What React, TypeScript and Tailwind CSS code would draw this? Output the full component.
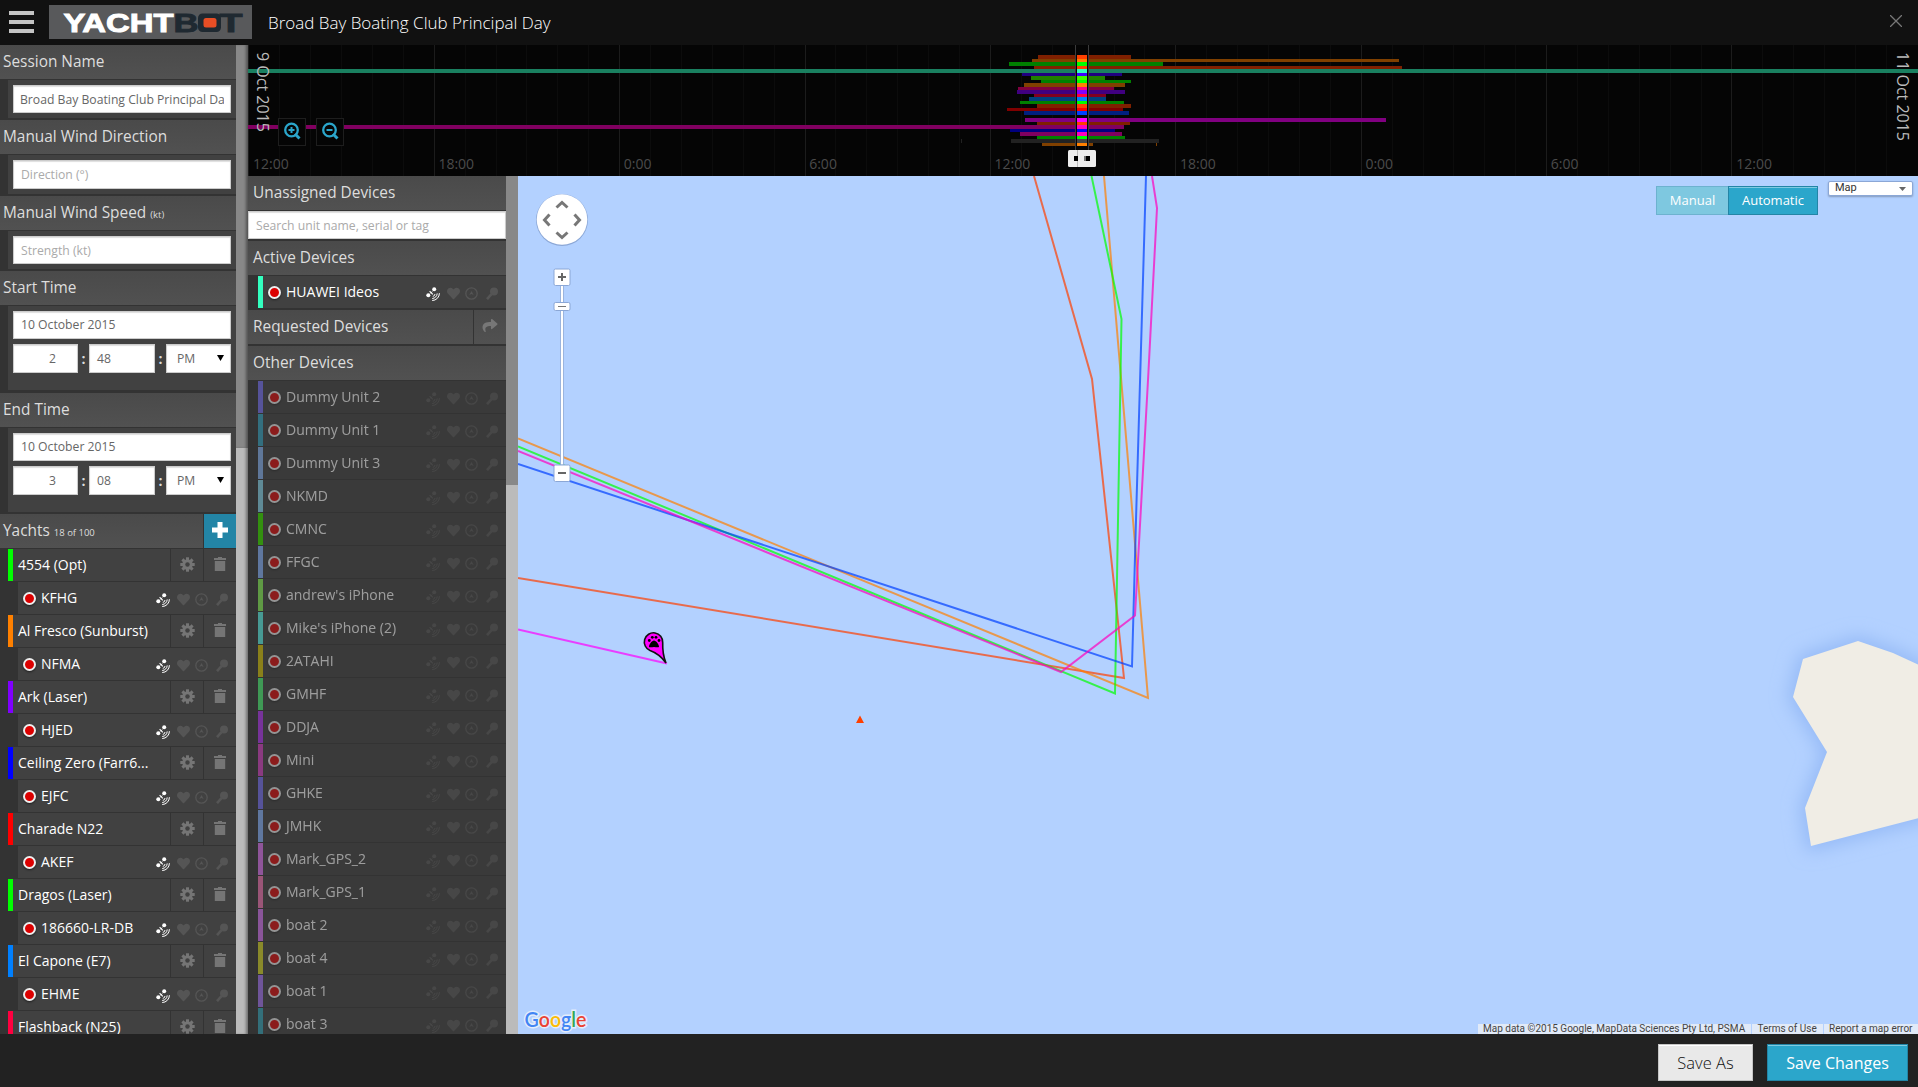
import React from "react";
import { FaHeart, FaShare } from "react-icons/fa";

const yachts = [
  { name: "4554 (Opt)", color: "#00ff00", device: "KFHG" },
  { name: "Al Fresco (Sunburst)", color: "#ff8000", device: "NFMA" },
  { name: "Ark (Laser)", color: "#8000ff", device: "HJED" },
  { name: "Ceiling Zero (Farr6...", color: "#0000ff", device: "EJFC" },
  { name: "Charade N22", color: "#ff0000", device: "AKEF" },
  { name: "Dragos (Laser)", color: "#00ff00", device: "186660-LR-DB" },
  { name: "El Capone (E7)", color: "#0080ff", device: "EHME" },
  { name: "Flashback (N25)", color: "#ff0040", device: "" },
];

const others: [string, string][] = [
  ["Dummy Unit 2", "#56539a"],
  ["Dummy Unit 1", "#336f7f"],
  ["Dummy Unit 3", "#5f7799"],
  ["NKMD", "#5f8a96"],
  ["CMNC", "#33900f"],
  ["FFGC", "#5f779f"],
  ["andrew's iPhone", "#5f9a44"],
  ["Mike's iPhone (2)", "#479a94"],
  ["2ATAHI", "#8a801a"],
  ["GMHF", "#3f9955"],
  ["DDJA", "#77339a"],
  ["Mini", "#8a3a80"],
  ["GHKE", "#56539a"],
  ["JMHK", "#5f779f"],
  ["Mark_GPS_2", "#8f559a"],
  ["Mark_GPS_1", "#9a5577"],
  ["boat 2", "#8a559a"],
  ["boat 4", "#8a8a2a"],
  ["boat 1", "#6f559a"],
  ["boat 3", "#336f7a"],
];

/* Timeline spans: row, start, end, colour, dimmed colour */
const spans: [number, number, number, string, string][] = [
  [0, 1038, 1131, "#ff4000", "#802000"],
  [1, 1032, 1399, "#ff8000", "#804000"],
  [2, 1009, 1163, "#00ff00", "#008000"],
  [3, 1034, 1402, "#ff4000", "#802000"],
  [4, 248, 1918, "#33ffbf", "#1a8060"],
  [5, 1022, 1122, "#4000ff", "#200080"],
  [6, 1031, 1105, "#40ff00", "#208000"],
  [7, 1041, 1131, "#00ff00", "#008000"],
  [8, 1024, 1125, "#ff8000", "#804000"],
  [9, 1018, 1114, "#ff0080", "#800040"],
  [10, 1017, 1125, "#8000ff", "#400080"],
  [11, 1034, 1106, "#ff0040", "#800020"],
  [12, 1029, 1106, "#0080ff", "#004080"],
  [13, 1020, 1124, "#00ff00", "#008000"],
  [14, 1037, 1131, "#ff4000", "#802000"],
  [15, 1007, 1123, "#ff0000", "#800000"],
  [16, 1024, 1129, "#0040ff", "#002080"],
  [18, 1025, 1386, "#ff00ff", "#800080"],
  [19, 1037, 1130, "#ff4000", "#802000"],
  [20, 248, 1124, "#ff00bf", "#800060"],
  [21, 1010, 1115, "#0000ff", "#000080"],
  [22, 1020, 1122, "#ff00bf", "#800060"],
  [23, 1037, 1125, "#00ff00", "#008000"],
  [24, 1011, 1159, "#444444", "#222222"],
  [25, 1042, 1093, "#ff8000", "#804000"],
];

const rowTop = (i: number) => Math.round(55 + 3.5 * i);

function Satellite() {
  return (
    <svg width="14" height="14" viewBox="0 0 14 14" fill="none" stroke="currentColor">
      <circle cx="8.200" cy="2.300" r="2" fill="currentColor" stroke="none" />
      <circle cx="2.300" cy="8.300" r="2" fill="currentColor" stroke="none" />
      <path d="M3.600 4.200l3.200 3.200" strokeWidth="1.200" />
      <path d="M7.400 3.400l-4 4" strokeWidth="1" strokeDasharray="1.500 0.800" />
      <path d="M9 7a2.600 2.600 0 0 1-2.200 2.400M11.200 6.400a5.200 5.200 0 0 1-5 5.100M13.400 6.200a7.200 7.200 0 0 1-7.200 7.300" strokeWidth="1" />
    </svg>
  );
}

function Gear() {
  return (
    <svg width="15" height="15" viewBox="-7.5 -7.5 15 15" fill="#757575">
      {[0, 45, 90, 135].map((a) => (
        <rect key={a} x="-1.500" y="-7.200" width="3" height="14.400" transform={`rotate(${a})`} />
      ))}
      <circle r="3.700" fill="none" stroke="#757575" strokeWidth="3" />
      <circle r="2.200" fill="#414141" />
    </svg>
  );
}

function Status({ live = true }: { live?: boolean }) {
  return (
    <div className="flex h-full w-[80px] items-center pt-[3px] text-[#555]">
      <span className={live ? "text-white" : ""}>
        <Satellite />
      </span>
      <FaHeart className="ml-[7px] h-[13px] w-[13px]" />
      <svg className="ml-[5px]" width="13" height="13" viewBox="0 0 13 13" fill="none" stroke="currentColor">
        <circle cx="6.500" cy="6.500" r="5.700" strokeWidth="1.300" />
        <path d="M4.300 8l2.200-4 2.200 4-2.200-1z" fill="currentColor" stroke="none" />
      </svg>
      <svg className="ml-[8px]" width="13" height="13" viewBox="0 0 13 13">
        <circle cx="8" cy="4.600" r="4" fill="currentColor" />
        <path d="M1 12.200l4.500-5" stroke="currentColor" strokeWidth="2.600" />
      </svg>
    </div>
  );
}

function Dot() {
  return <span className="h-[13px] w-[13px] shrink-0 rounded-full border-2 border-[#eee] bg-[#dc0000] shadow-[0_1px_2px_#0008]" />;
}

function Header({ children }: { children: React.ReactNode }) {
  return (
    <div className="flex h-[34px] shrink-0 items-start bg-linear-to-b from-[#4a4a4a] to-[#515151] text-[15.4px] leading-[34px] text-[#ddd]">
      {children}
    </div>
  );
}

const field = "box-border border border-[#ccc] bg-white text-[12.2px] text-[#666] shadow-[inset_0_1px_1px_#0002] flex items-center overflow-hidden whitespace-nowrap pt-px";

function TimeBlock({ hour, minute }: { hour: string; minute: string }) {
  return (
    <div className="ml-2 mt-px h-[84px] shrink-0 bg-[#414141] pl-[5px] pt-[5px]">
      <div className={`${field} h-[28px] w-[218px] pl-[7px]`}>10 October 2015</div>
      <div className="mt-[5px] flex w-[218px] items-center justify-between text-[14px] font-bold text-[#ddd]">
        <div className={`${field} h-[29px] w-[65px] justify-end pr-[21px] font-normal`}>{hour}</div>
        <span className="w-[11px] text-center">:</span>
        <div className={`${field} h-[29px] w-[66px] pl-[7px] font-normal`}>{minute}</div>
        <span className="w-[11px] text-center">:</span>
        <div className={`${field} h-[29px] w-[65px] justify-between pl-[10px] pr-[6px] font-normal`}>
          PM
          <svg className="mb-[2px]" width="7" height="6" viewBox="0 0 7 6"><path d="M0 0h7L3.500 6z" fill="#000" /></svg>
        </div>
      </div>
    </div>
  );
}

function Sidebar() {
  return (
    <div className="flex h-full w-[236px] flex-col overflow-hidden bg-[#333]">
      <Header><span className="pl-[3px]">Session Name</span></Header>
      <div className="ml-2 mt-px h-[38px] shrink-0 bg-[#414141] pl-[5px] pt-[5px]">
        <div className={`${field} h-[28px] w-[218px] px-[6px]`}><span className="overflow-hidden pt-px">Broad Bay Boating Club Principal Day</span></div>
      </div>
      <div className="h-[2px] shrink-0" />
      <Header><span className="pl-[3px]">Manual Wind Direction</span></Header>
      <div className="ml-2 mt-px h-[39px] shrink-0 bg-[#414141] pl-[5px] pt-[5px]">
        <div className={`${field} h-[29px] w-[218px] pl-[7px]`}><span className="pt-px text-[#aaa]">Direction (°)</span></div>
      </div>
      <div className="h-[2px] shrink-0" />
      <Header><span className="pl-[3px]">Manual Wind Speed <small className="text-[9.5px]">(kt)</small></span></Header>
      <div className="ml-2 mt-px h-[38px] shrink-0 bg-[#414141] pl-[5px] pt-[5px]">
        <div className={`${field} h-[28px] w-[218px] pl-[7px]`}><span className="pt-px text-[#aaa]">Strength (kt)</span></div>
      </div>
      <div className="h-[2px] shrink-0" />
      <Header><span className="pl-[3px]">Start Time</span></Header>
      <TimeBlock hour="2" minute="48" />
      <div className="h-[3px] shrink-0" />
      <Header><span className="pl-[3px]">End Time</span></Header>
      <TimeBlock hour="3" minute="08" />
      <div className="h-[2px] shrink-0" />
      <Header>
        <span className="grow pl-[3px]">Yachts <small className="text-[9.5px]">18 of 100</small></span>
        <span className="flex h-full w-[33px] items-center justify-center border-l border-[#333] bg-[#2385a6] pb-[2px]">
          <svg width="16" height="16" viewBox="0 0 16 16"><path d="M5.500 0h5v5.500H16v5h-5.500V16h-5v-5.500H0v-5h5.500z" fill="#fff" /></svg>
        </span>
      </Header>
      {yachts.map((y) => (
        <React.Fragment key={y.name}>
          <div className="ml-2 mt-px flex h-[32px] shrink-0 text-[14px] text-white">
            <span className="w-[5px]" style={{ background: y.color }} />
            <span className="w-[157px] bg-[#414141] pl-[5px] leading-[31px]">{y.name}</span>
            <span className="ml-px flex w-[32px] items-center justify-center bg-[#414141] pb-[2px]"><Gear /></span>
            <span className="ml-px flex w-[32px] items-center justify-center bg-[#414141] pb-[2px]">
              <svg width="12" height="14" viewBox="0 0 12 14" fill="#757575"><path d="M4 0h4v1h4v2H0V1h4zM.8 4h10.400v10H.8z" /></svg>
            </span>
          </div>
          {y.device && (
            <div className="ml-[18px] mt-px flex h-[32px] shrink-0 items-center bg-[#414141] pl-[5px] text-[14px] text-white">
              <Dot />
              <span className="grow pb-[2px] pl-[5px]">{y.device}</span>
              <Status />
            </div>
          )}
        </React.Fragment>
      ))}
    </div>
  );
}

function DeviceRow({ name, color, live = false }: { name: string; color: string; live?: boolean }) {
  return (
    <div className="ml-[10px] mt-px flex h-[32px] shrink-0 text-[14px]">
      <span className="w-[5px]" style={{ background: color }} />
      <div className={live ? "flex grow items-center bg-[#414141] pl-[5px] text-white" : "flex grow items-center bg-[#3a3a3a] pl-[5px] text-white"}>
        <div className={live ? "flex h-full grow items-center" : "flex h-full grow items-center opacity-50"}>
          <Dot />
          <span className="grow pb-[2px] pl-[5px]">{name}</span>
          <Status live={live} />
        </div>
      </div>
    </div>
  );
}

function Devices() {
  return (
    <div className="flex h-full w-[258px] flex-col overflow-hidden bg-[#333]">
      <Header><span className="pl-[5px]">Unassigned Devices</span></Header>
      <div className={`${field} mt-px h-[28px] w-full shrink-0 pl-[7px]`}><span className="pt-px text-[#aaa]">Search unit name, serial or tag</span></div>
      <div className="h-[2px] shrink-0" />
      <Header><span className="pl-[5px]">Active Devices</span></Header>
      <DeviceRow name="HUAWEI Ideos" color="#33ffbf" live />
      <div className="h-[2px] shrink-0" />
      <Header>
        <span className="grow pl-[5px]">Requested Devices</span>
        <span className="flex h-full w-[33px] items-center justify-center border-l border-[#333] pb-[3px] text-[#777]"><FaShare className="h-[15px] w-[16px]" /></span>
      </Header>
      <div className="h-[2px] shrink-0" />
      <Header><span className="pl-[5px]">Other Devices</span></Header>
      {others.map(([n, c]) => <DeviceRow key={n} name={n} color={c} />)}
    </div>
  );
}

function Timeline() {
  const labels = ["12:00", "18:00", "0:00", "6:00", "12:00", "18:00", "0:00", "6:00", "12:00"];
  return (
    <svg className="block h-[131px] w-[1670px] shrink-0" viewBox="248 45 1670 131" shapeRendering="crispEdges">
      <rect x="248" y="45" width="1670" height="131" fill="#050505" />
      {Array.from({ length: 54 }, (_, i) => (
        <rect key={i} x={Math.floor(248.8 + i * 30.9)} y="45" width="1" height="131" fill={i % 6 ? "#0c0c0c" : "#1c1c1c"} />
      ))}
      {spans.map(([r, a, b, , dim]) => (
        <rect key={r} x={a} y={rowTop(r)} width={b - a} height={rowTop(r + 1) - rowTop(r)} fill={dim} />
      ))}
      <rect x="1156" y="143" width="1" height="3" fill="#804000" />
      <rect x="961" y="139" width="1" height="4" fill="#222" />
      <rect x="1075" y="45" width="14" height="131" fill="#050505" />
      {spans.map(([r, , , c]) => (
        <rect key={r} x="1077" y={rowTop(r)} width="10" height={rowTop(r + 1) - rowTop(r)} fill={c} />
      ))}
      <rect x="1075" y="45" width="1" height="106" fill="#3c3c3c" />
      <rect x="1088" y="45" width="1" height="106" fill="#3c3c3c" />
      <g shapeRendering="auto">
        <rect x="1068" y="150" width="28" height="17" rx="1.500" fill="#eee" />
        <rect x="1077" y="150" width="1" height="17" fill="#bbb" />
        <rect x="1074" y="156" width="4" height="5" fill="#000" />
        <rect x="1084" y="156" width="2" height="5" fill="#777" />
        <rect x="1086" y="156" width="4" height="5" fill="#000" />
      </g>
      {labels.map((t, i) => (
        <text key={i} x={253 + i * 185.4} y="169" fontSize="14" fill="#4b4b4b">{t}</text>
      ))}
      <text transform="translate(257 52) rotate(90)" fontSize="16" fill="#bbb">9 Oct 2015</text>
      <text transform="translate(1897 52) rotate(90)" fontSize="16" fill="#bbb">11 Oct 2015</text>
      {[278, 316].map((x, i) => (
        <g key={x} shapeRendering="auto">
          <rect x={x + 0.5} y="118.500" width="27" height="27" fill="#050505" stroke="#1e1e1e" />
          <circle cx={x + 13.5} cy="130" r="6.300" fill="none" stroke="#2ba6cb" strokeWidth="2.300" />
          <path d={`M${x + 17} 134l4.500 4.500`} stroke="#2ba6cb" strokeWidth="3" />
          <path d={i ? `M${x + 10.5} 130h6` : `M${x + 10.5} 130h6M${x + 13.5} 127v6`} stroke="#2ba6cb" strokeWidth="2" />
        </g>
      ))}
    </svg>
  );
}

const land = "M1803 659L1858 641L1893 653L1930 670V815L1811 846L1805 808L1827 752L1793 697z";

function MapView() {
  return (
    <div className="relative h-[858px] w-[1400px] overflow-hidden bg-[#b3d1ff]">
      <svg className="block" width="1400" height="858" viewBox="518 176 1400 858" fill="none">
        <defs>
          <filter id="shore" x="-30%" y="-30%" width="160%" height="160%"><feGaussianBlur stdDeviation="9" /></filter>
        </defs>
        <path d={land} fill="#95baf6" stroke="#95baf6" strokeWidth="10" filter="url(#shore)" />
        <path d={land} fill="#f0ede5" />
        <g strokeWidth="2" strokeOpacity="0.7">
          <path d="M518 578L1124 678L1092 379L1034 176" stroke="#ff4000" />
          <path d="M518 438.500L1148 698L1104 176" stroke="#ff8000" />
          <path d="M518 446.500L1115 693.500L1121.500 319L1091.500 176" stroke="#00ff00" />
          <path d="M518 464L1132 666.500L1136 520L1146 176" stroke="#0040ff" />
          <path d="M518 451L1061 672L1135 615.500L1148.500 371L1157 208L1152 176" stroke="#ff00bf" />
          <path d="M518 629.500L667 663.500" stroke="#ff00ff" />
        </g>
        <path d="M666 663C663 656 662.500 650 662.700 642.500A9.200 9.200 0 1 0 650 650.500C657 653 661 656 666 663z" fill="#ff00ff" stroke="#111" strokeWidth="1.600" />
        <g fill="#000">
          <path d="M654 640.500c2 0 5 4 5 6 0 1.500-3 .6-5 .6s-5 .9-5-.6c0-2 3-6 5-6z" />
          <circle cx="649.300" cy="640.500" r="1.400" /><circle cx="652.300" cy="637.300" r="1.400" /><circle cx="656" cy="637.300" r="1.400" /><circle cx="659" cy="640.500" r="1.400" />
        </g>
        <path d="M860 715.500l4 7.500h-8z" fill="#ff4000" />
        <g>
          <circle cx="562" cy="220" r="26" fill="#8ba7d6" />
          <circle cx="562" cy="219.500" r="25.300" fill="#fff" />
          <path d="M556.500 207.500l5.500-5 5.500 5M556.500 232.500l5.500 5 5.500-5M549.500 214.500l-5 5.500 5 5.500M574.500 214.500l5 5.500-5 5.500" stroke="#777" strokeWidth="3" />
          <rect x="560.500" y="285" width="3" height="180" fill="#fff" stroke="#8ba7d6" strokeWidth="0.800" />
          {[269, 465].map((y) => <rect key={y} x="554" y={y} width="16" height="16.500" rx="1.500" fill="#fff" stroke="#8ba7d6" />)}
          <rect x="554" y="302.500" width="16" height="8" rx="1.500" fill="#fff" stroke="#8ba7d6" />
          <path d="M558 277h8M562 273v8M558 473h8" stroke="#666" strokeWidth="2" />
          <path d="M558 306.500h8" stroke="#777" />
        </g>
        <text x="524.500" y="1026.500" fontFamily="Lato" fontWeight="600" fontSize="20.500" textLength="62" lengthAdjust="spacingAndGlyphs" stroke="#e4edfb" strokeWidth="3" paintOrder="stroke">
          <tspan fill="#4285f4">G</tspan><tspan fill="#ea4335">o</tspan><tspan fill="#fbbc05">o</tspan><tspan fill="#4285f4">g</tspan><tspan fill="#34a853">l</tspan><tspan fill="#ea4335">e</tspan>
        </text>
      </svg>
      <div className="absolute left-[1138px] top-[10px] flex h-[29px] text-[13px] font-medium leading-[27px] text-white">
        <span className="w-[72px] border border-r-0 border-[#6db2cf] bg-[#7ec8e0] text-center">Manual</span>
        <span className="w-[90px] border border-[#2385a6] bg-[#2ba6cb] text-center shadow-[inset_0_1px_0_#7fcbe2]">Automatic</span>
      </div>
      <div className="absolute left-[1310px] top-[5px] flex h-[15px] w-[85px] items-center justify-between rounded-xs border border-[#8ba7d6] bg-white pl-[6px] pr-[6px] font-[Roboto] text-[11px] text-[#333] shadow-[0_1px_2px_#0004]">
        Map
        <svg width="7" height="4" viewBox="0 0 7 4"><path d="M0 0h7L3.500 4z" fill="#666" /></svg>
      </div>
      <div className="absolute bottom-0 right-0 flex h-[10px] gap-px whitespace-nowrap font-[Roboto] text-[10px] leading-[10px] text-[#444]">
        <span className="w-[273px] bg-[#e1eaf8] pl-[5px]">Map data ©2015 Google, MapData Sciences Pty Ltd, PSMA</span>
        <span className="w-[71px] bg-[#e1eaf8] pl-[5.5px]">Terms of Use</span>
        <span className="w-[94px] bg-[#e1eaf8] pl-[5px]">Report a map error</span>
      </div>
    </div>
  );
}

export default function App() {
  return (
    <div className="flex h-[1087px] w-[1918px] flex-col overflow-hidden bg-[#222] font-['Open_Sans',sans-serif]">
      <header className="flex h-[45px] shrink-0 items-start bg-[#111]">
        <div className="ml-[9px] mt-[11px] flex flex-col gap-[5px]">
          {[0, 1, 2].map((i) => <span key={i} className="h-[4px] w-[25px] bg-[#c4c4c4]" />)}
        </div>
        <svg className="ml-[15px] mt-[5px]" width="203" height="34" viewBox="49 5 203 34">
          <rect x="49" y="5" width="203" height="34" fill="#58595b" />
          <g fontFamily="Liberation Sans" fontWeight="700" fontSize="25" strokeWidth="0.900">
            <text x="63.500" y="31.500" textLength="110" lengthAdjust="spacingAndGlyphs" fill="#fff" stroke="#fff">YACHT</text>
            <text x="173.500" y="31.500" textLength="25" lengthAdjust="spacingAndGlyphs" fill="#1f2931" stroke="#1f2931">B</text>
            <text x="219.500" y="31.500" textLength="23" lengthAdjust="spacingAndGlyphs" fill="#1f2931" stroke="#1f2931">T</text>
          </g>
          <rect x="198" y="13.500" width="23" height="18.500" rx="4.500" fill="#1f2931" />
          <rect x="203.500" y="18" width="13" height="9.500" rx="2.500" fill="#e84e25" />
        </svg>
        <h1 className="ml-[16px] text-[17px] font-light leading-[46px] text-[#fff]">Broad Bay Boating Club Principal Day</h1>
        <svg className="ml-auto mr-[16px] mt-[15px]" width="12" height="12" viewBox="0 0 12 12"><path d="M0 0l12 12M12 0L0 12" stroke="#777" strokeWidth="1.300" /></svg>
      </header>
      <main className="flex h-[989px] shrink-0">
        <Sidebar />
        <div className="h-full w-[12px] bg-[#bbb] shadow-[inset_-3px_0_3px_-1px_#0006]"><div className="h-[403px] bg-[#888] shadow-[inset_-3px_0_3px_-1px_#0006]" /></div>
        <div className="flex flex-col">
          <Timeline />
          <div className="flex h-[858px]">
            <Devices />
            <div className="h-full w-[12px] bg-[#bbb]"><div className="h-[309px] bg-[#888]" /></div>
            <MapView />
          </div>
        </div>
      </main>
      <footer className="flex h-[53px] items-start justify-end gap-[14px] pr-[10px] pt-[10px] text-[16px] leading-[36px]">
        <button className="h-[37px] w-[95px] border border-[#c6c6c6] bg-[#e9e9e9] text-[16.5px] font-light text-[#111] shadow-[inset_0_1px_0_#fff]">Save As</button>
        <button className="h-[37px] w-[141px] border border-[#2385a6] bg-[#2ba6cb] text-white shadow-[inset_0_1px_0_#7fcbe2]">Save Changes</button>
      </footer>
    </div>
  );
}
